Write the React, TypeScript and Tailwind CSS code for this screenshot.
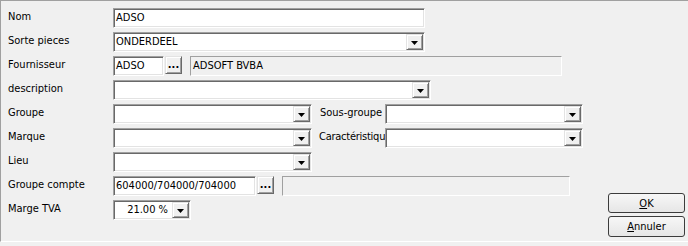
import React from "react";

const sunken =
  "bg-white border border-t-[#a0a0a0] border-l-[#a0a0a0] border-r-white border-b-white shadow-[inset_1px_1px_0_#696969,inset_-1px_-1px_0_#e3e3e3]";
const raised =
  "bg-[#f0f0f0] border border-t-[#e3e3e3] border-l-[#e3e3e3] border-r-[#696969] border-b-[#696969] shadow-[inset_1px_1px_0_#ffffff,inset_-1px_-1px_0_#a0a0a0]";
const flat =
  "bg-[#f0f0f0] border border-t-[#a0a0a0] border-l-[#a0a0a0] border-r-white border-b-white";

function Label({ children, width = "w-[112px] pl-[7px]" }: { children: React.ReactNode; width?: string }) {
  return (
    <div className={`${width} shrink-0 overflow-hidden whitespace-nowrap pt-[2px] leading-[13px]`}>
      {children}
    </div>
  );
}

function Arrow() {
  return (
    <svg width="7" height="4" viewBox="0 0 7 4" className="block">
      <polygon points="0,0 7,0 3.5,4" fill="#000" />
    </svg>
  );
}

function DropButton() {
  return (
    <div className={`${raised} w-[17px] shrink-0 flex items-center justify-center pt-[1px]`}>
      <Arrow />
    </div>
  );
}

function Edit({ width, value }: { width: string; value?: string }) {
  return (
    <div className={`${sunken} ${width} h-5 shrink-0 flex items-center pl-[2px] leading-[16px] whitespace-nowrap overflow-hidden`}>
      {value}
    </div>
  );
}

function Combo({ width, value, right }: { width: string; value?: string; right?: boolean }) {
  return (
    <div className={`${sunken} ${width} h-5 shrink-0 flex items-stretch p-[1px]`}>
      <div
        className={`flex-1 flex items-center leading-[16px] whitespace-nowrap overflow-hidden ${
          right ? "justify-end pr-[4px]" : "pl-[1px]"
        }`}
      >
        {value}
      </div>
      <DropButton />
    </div>
  );
}

function Dots() {
  return (
    <div className={`${raised} w-[17px] h-[18px] shrink-0 self-center flex items-center justify-center font-bold leading-none pb-[2px]`}>
      ...
    </div>
  );
}

function ReadOnly({ width, value }: { width: string; value?: string }) {
  return (
    <div className={`${flat} ${width} h-5 shrink-0 flex items-center pl-[2px] leading-[16px] whitespace-nowrap`}>
      {value}
    </div>
  );
}

function Row({ children }: { children: React.ReactNode }) {
  return <div className="flex items-start h-5">{children}</div>;
}

export default function App() {
  return (
    <div className="w-[688px] h-[246px] bg-[#f0f0f0] text-black text-[11px] font-['DejaVu_Sans_Condensed','Liberation_Sans',sans-serif]">
      <div className="h-[242px] flex border-t border-l border-b border-t-[#a0a0a0] border-l-[#a0a0a0] border-b-white">
        <div className="flex flex-col gap-1 pt-[7px]">
          <Row>
            <Label>Nom</Label>
            <Edit width="w-[312px]" value="ADSO" />
          </Row>
          <Row>
            <Label>Sorte pieces</Label>
            <Combo width="w-[312px]" value="ONDERDEEL" />
          </Row>
          <Row>
            <Label>Fournisseur</Label>
            <Edit width="w-[51px]" value="ADSO" />
            <div className="ml-[1px]">
              <Dots />
            </div>
            <div className="ml-2">
              <ReadOnly width="w-[372px]" value="ADSOFT BVBA" />
            </div>
          </Row>
          <Row>
            <Label>description</Label>
            <Combo width="w-[318px]" />
          </Row>
          <Row>
            <Label>Groupe</Label>
            <Combo width="w-[199px]" />
            <Label width="w-[73px] pl-2">Sous-groupe</Label>
            <Combo width="w-[198px]" />
          </Row>
          <Row>
            <Label>Marque</Label>
            <Combo width="w-[199px]" />
            <Label width="w-[73px] pl-[7px] tracking-[-0.25px]">Caractéristiqu</Label>
            <Combo width="w-[198px]" />
          </Row>
          <Row>
            <Label>Lieu</Label>
            <Combo width="w-[199px]" />
          </Row>
          <Row>
            <Label>Groupe compte</Label>
            <Edit width="w-[143px]" value="604000/704000/704000" />
            <div className="ml-[1px]">
              <Dots />
            </div>
            <div className="ml-2">
              <ReadOnly width="w-[288px]" />
            </div>
          </Row>
          <Row>
            <Label>Marge TVA</Label>
            <Combo width="w-[78px]" value="21.00 %" right />
          </Row>
        </div>
        <div className="ml-auto flex flex-col justify-end gap-[3px] pb-[4px] pr-[3px]">
          <button className="w-[77px] h-5 rounded-[3px] border border-[#3c3c3c] bg-gradient-to-b from-[#f7f7f7] to-[#e6e6e6] leading-none">
            <span className="underline">O</span>K
          </button>
          <button className="w-[77px] h-[21px] rounded-[3px] border border-[#3c3c3c] bg-gradient-to-b from-[#f7f7f7] to-[#e6e6e6] leading-none">
            <span className="underline">A</span>nnuler
          </button>
        </div>
      </div>
    </div>
  );
}
